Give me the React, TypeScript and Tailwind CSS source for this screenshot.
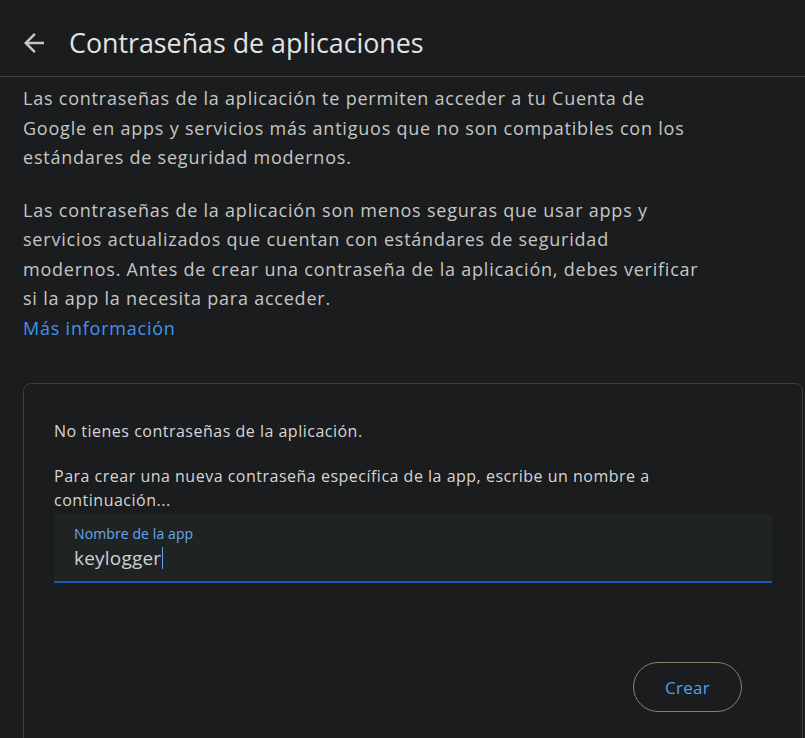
import React from "react";

export default function App() {
  return (
    <div
      className="min-h-[738px] w-full bg-[#1b1c1e] overflow-hidden"
      style={{ fontFamily: "'Open Sans', Roboto, sans-serif" }}
    >
      {/* Header */}
      <div className="flex h-[77px] items-center gap-[20px] border-b border-[#3c3d3f] pl-[19px] pt-[10px]">
        <svg width="30" height="30" viewBox="0 0 24 24" className="shrink-0">
          <path
            d="M20 11H7.83l5.59-5.59L12 4l-8 8 8 8 1.41-1.41L7.83 13H20v-2z"
            fill="#c4c7c5"
          />
        </svg>
        <h1 className="text-[26.8px] font-normal text-[#e3e3e3]">
          Contraseñas de aplicaciones
        </h1>
      </div>

      <div className="px-[23px] pt-[7px] tracking-[0.78px]">
        <p className="text-[18px] leading-[29.5px] text-[#c4c7c5]">
          Las contraseñas de la aplicación te permiten acceder a tu Cuenta de
          <br />
          Google en apps y servicios más antiguos que no son compatibles con los
          <br />
          estándares de seguridad modernos.
        </p>
        <p className="mt-[23px] text-[18px] leading-[29.5px] text-[#c4c7c5]">
          Las contraseñas de la aplicación son menos seguras que usar apps y
          <br />
          servicios actualizados que cuentan con estándares de seguridad
          <br />
          modernos. Antes de crear una contraseña de la aplicación, debes verificar
          <br />
          si la app la necesita para acceder.
        </p>
        <a className="block text-[18px] leading-[29.5px] text-[#3d95ef]">
          Más información
        </a>
      </div>

      {/* Card */}
      <div className="mr-[2px] ml-[23px] mt-[40px] h-[400px] rounded-t-[8px] border border-[#3c3d3f] px-[30px] pt-[35px]">
        <p className="text-[16px] leading-[24px] tracking-[0.5px] text-[#d6d6d6]">
          No tienes contraseñas de la aplicación.
        </p>
        <p className="mt-[21px] text-[16px] leading-[24px] tracking-[0.5px] text-[#d6d6d6]">
          Para crear una nueva contraseña específica de la app, escribe un nombre a
          <br />
          continuación...
        </p>
        <div className="mt-[2px] flex h-[69px] flex-col rounded-t-[4px] border-b-2 border-[#1a57b0] bg-[#202324] pl-[20px] pt-[11px]">
          <span className="text-[14px] leading-[18px] tracking-[0.1px] text-[#63a8ef]">
            Nombre de la app
          </span>
          <div className="mt-[2px] flex items-center text-[19px] leading-[26px] tracking-[0.2px] text-[#d0d0d0]">
            <span>keylogger</span>
            <span className="ml-[1px] inline-block h-[22px] w-[1px] bg-[#5fa5ee]" />
          </div>
        </div>
        <div className="mt-[79px] flex justify-end pr-[30px]">
          <button className="flex h-[50px] w-[109px] items-center justify-center rounded-full border border-[#8a8070] pt-[1px] text-[17px] font-medium tracking-[0.3px] text-[#4ba0f2]">
            Crear
          </button>
        </div>
      </div>
    </div>
  );
}
